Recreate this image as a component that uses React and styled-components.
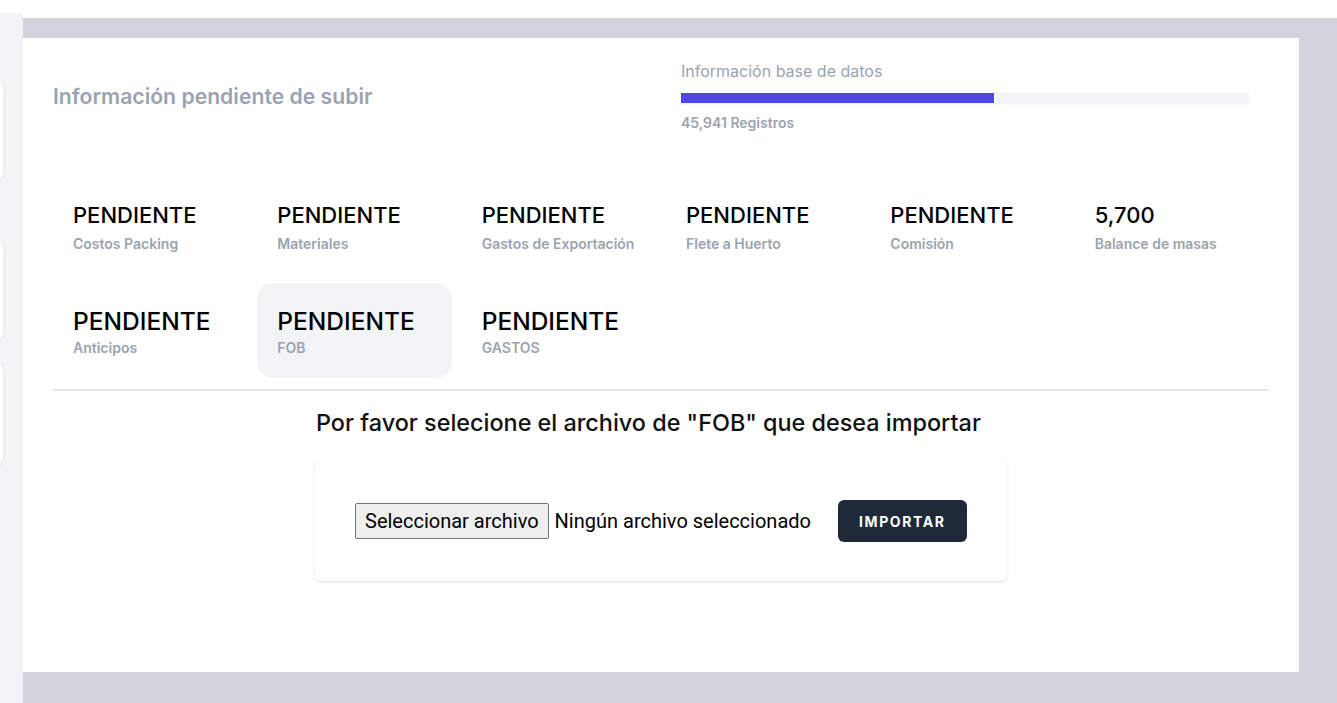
import React from "react";
import styled, { createGlobalStyle } from "styled-components";

const GlobalStyle = createGlobalStyle`
  * { box-sizing: border-box; }
  html, body { margin: 0; padding: 0; background: #ffffff; }
  body { font-family: Inter, "Noto Sans", sans-serif; height: 703px; overflow: hidden; }
`;

const Page = styled.div`
  display: flex;
  height: 703px;
`;

const Sidebar = styled.aside`
  width: 23px;
  flex: none;
  margin-top: 13px;
  background: #f3f4f6;
  overflow: hidden;
`;

const SideStack = styled.div`
  display: flex;
  flex-direction: column;
  align-items: flex-end;
  padding: 67px 20px 0 0;
`;

const SideCard = styled.div`
  width: 200px;
  height: ${(p) => p.$h}px;
  margin-bottom: ${(p) => p.$mb}px;
  background: #ffffff;
  border-radius: 8px;
  box-shadow: 0 1px 4px rgba(0, 0, 0, 0.08);
`;

const Main = styled.main`
  flex: 1;
  margin-top: 18px;
  background: #d1d5db;
  padding: 20px 38px 31px 0;
  display: flex;
`;

const Card = styled.section`
  flex: 1;
  background: #ffffff;
  padding: 21px 30px 0 30px;
`;

const Header = styled.div`
  display: grid;
  grid-template-columns: 1fr 1fr;
  align-items: center;
`;

const PageTitle = styled.h2`
  margin: 0;
  font-size: 21.2px;
  font-weight: 600;
  color: #9ca3af;
  line-height: 28px;
`;

const DbBlock = styled.div`
  padding: 0 20px;
`;

const DbLabel = styled.div`
  font-size: 16px;
  line-height: 24px;
  color: #9ca3af;
`;

const Bar = styled.div`
  margin-top: 10px;
  height: 10px;
  background: #f3f4f6;
  box-shadow: 0 1px 2px rgba(0, 0, 0, 0.08);
`;

const BarFill = styled.div`
  height: 100%;
  background: #4f46e5;
`;

const DbCount = styled.div`
  margin-top: 10px;
  font-size: 14px;
  line-height: 20px;
  font-weight: 600;
  color: #9ca3af;
`;

const StatGrid = styled.div`
  margin-top: 44px;
  display: grid;
  grid-template-columns: repeat(6, 1fr);
  gap: 9px 10px;
`;

const Stat = styled.div`
  padding: 22px 20px 20px 20px;
  border-radius: 16px;
  background: ${(p) => (p.$active ? "#f3f4f6" : "transparent")};
`;

const StatValue = styled.div`
  font-size: ${(p) => (p.$big ? "24.5px" : "22px")};
  line-height: 32px;
  font-weight: 500;
  color: #000000;
`;

const StatLabel = styled.div`
  margin-top: ${(p) => (p.$big ? "1px" : "3px")};
  font-size: 14px;
  line-height: 20px;
  font-weight: 600;
  color: #9ca3af;
`;

const Divider = styled.hr`
  margin: 11px 0 0 0;
  border: none;
  height: 2px;
  background: #e5e7eb;
`;

const ImportSection = styled.div`
  width: 692px;
  margin: 18px auto 0 auto;
`;

const ImportTitle = styled.h3`
  margin: 0 0 0 1px;
  font-size: 23.4px;
  line-height: 28px;
  font-weight: 500;
  color: #111111;
`;

const UploadCard = styled.div`
  margin-top: 23px;
  background: #ffffff;
  border-radius: 6px;
  box-shadow: 0 1px 3px rgba(0, 0, 0, 0.1), 0 1px 2px rgba(0, 0, 0, 0.04);
  padding: 40px 40px 39px 40px;
  display: flex;
  align-items: center;
`;

const FilePicker = styled.label`
  display: flex;
  align-items: center;
  gap: 6px;
  font-family: Roboto, "Liberation Sans", sans-serif;
  font-size: 20px;
  color: #000000;
`;

const FileButton = styled.span`
  display: inline-flex;
  align-items: center;
  height: 36px;
  padding: 0 9px;
  background: #efefef;
  border: 1px solid #767676;
  border-radius: 2px;
`;

const HiddenInput = styled.input`
  display: none;
`;

const ImportButton = styled.button`
  margin-left: 27px;
  height: 42px;
  padding: 0 21px;
  border: none;
  border-radius: 6px;
  background: #1f2937;
  color: #ffffff;
  font-family: Inter, sans-serif;
  font-size: 14px;
  font-weight: 700;
  letter-spacing: 1.6px;
`;

const stats = [
  { value: "PENDIENTE", label: "Costos Packing" },
  { value: "PENDIENTE", label: "Materiales" },
  { value: "PENDIENTE", label: "Gastos de Exportación" },
  { value: "PENDIENTE", label: "Flete a Huerto" },
  { value: "PENDIENTE", label: "Comisión" },
  { value: "5,700", label: "Balance de masas" },
  { value: "PENDIENTE", label: "Anticipos", big: true },
  { value: "PENDIENTE", label: "FOB", big: true, active: true },
  { value: "PENDIENTE", label: "GASTOS", big: true },
];

export default function App() {
  const progress = 55.1;
  return (
    <>
      <GlobalStyle />
      <Page>
        <Sidebar>
          <SideStack>
            <SideCard $h={100} $mb={60} />
            <SideCard $h={100} $mb={22} />
            <SideCard $h={103} $mb={0} />
          </SideStack>
        </Sidebar>
        <Main>
          <Card>
            <Header>
              <PageTitle>Información pendiente de subir</PageTitle>
              <DbBlock>
                <DbLabel>Información base de datos</DbLabel>
                <Bar>
                  <BarFill style={{ width: `${progress}%` }} />
                </Bar>
                <DbCount>45,941 Registros</DbCount>
              </DbBlock>
            </Header>
            <StatGrid>
              {stats.map((s, i) => (
                <Stat key={i} $active={s.active}>
                  <StatValue $big={s.big}>{s.value}</StatValue>
                  <StatLabel $big={s.big}>{s.label}</StatLabel>
                </Stat>
              ))}
            </StatGrid>
            <Divider />
            <ImportSection>
              <ImportTitle>Por favor selecione el archivo de "FOB" que desea importar</ImportTitle>
              <UploadCard>
                <FilePicker>
                  <HiddenInput type="file" />
                  <FileButton>Seleccionar archivo</FileButton>
                  <span>Ningún archivo seleccionado</span>
                </FilePicker>
                <ImportButton>IMPORTAR</ImportButton>
              </UploadCard>
            </ImportSection>
          </Card>
        </Main>
      </Page>
    </>
  );
}
